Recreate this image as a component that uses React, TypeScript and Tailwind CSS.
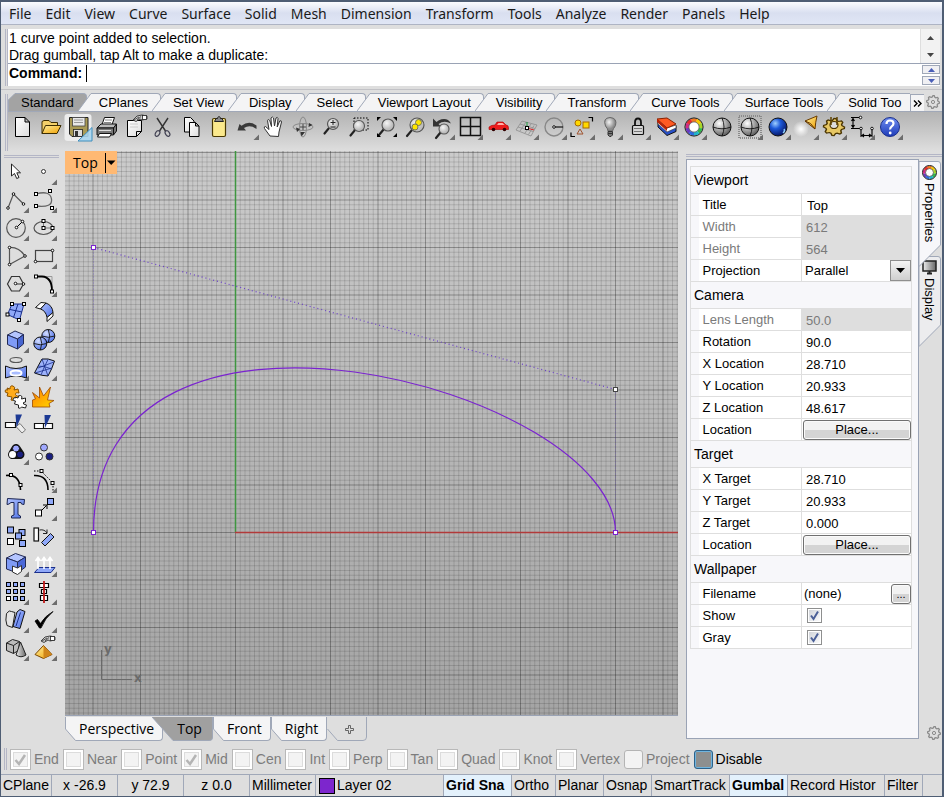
import { useState, type ReactNode } from "react"

interface Tool {
  name: string
  icon: ReactNode
  fly?: boolean
}

interface PropertyRow {
  name: string
  value?: string
  kind?: "text" | "disabled" | "select" | "button" | "file" | "check"
}

const menus = ["File", "Edit", "View", "Curve", "Surface", "Solid", "Mesh", "Dimension", "Transform", "Tools", "Analyze", "Render", "Panels", "Help"]

const toolTabs = ["Standard", "CPlanes", "Set View", "Display", "Select", "Viewport Layout", "Visibility", "Transform", "Curve Tools", "Surface Tools", "Solid Too"]

const snaps = ["End", "Near", "Point", "Mid", "Cen", "Int", "Perp", "Tan", "Quad", "Knot", "Vertex"]

const sections: { title: string; rows: PropertyRow[] }[] = [
  {
    title: "Viewport",
    rows: [
      { name: "Title", value: "Top" },
      { name: "Width", value: "612", kind: "disabled" },
      { name: "Height", value: "564", kind: "disabled" },
      { name: "Projection", value: "Parallel", kind: "select" },
    ],
  },
  {
    title: "Camera",
    rows: [
      { name: "Lens Length", value: "50.0", kind: "disabled" },
      { name: "Rotation", value: "90.0" },
      { name: "X Location", value: "28.710" },
      { name: "Y Location", value: "20.933" },
      { name: "Z Location", value: "48.617" },
      { name: "Location", value: "Place...", kind: "button" },
    ],
  },
  {
    title: "Target",
    rows: [
      { name: "X Target", value: "28.710" },
      { name: "Y Target", value: "20.933" },
      { name: "Z Target", value: "0.000" },
      { name: "Location", value: "Place...", kind: "button" },
    ],
  },
  {
    title: "Wallpaper",
    rows: [
      { name: "Filename", value: "(none)", kind: "file" },
      { name: "Show", kind: "check" },
      { name: "Gray", kind: "check" },
    ],
  },
]

// Small square control point used by many icons
const Pt = ({ x, y, s = 3, fill = "#fff" }: { x: number; y: number; s?: number; fill?: string }) => (
  <rect x={x - s / 2} y={y - s / 2} width={s} height={s} fill={fill} stroke="#000" strokeWidth="1" />
)

const Dot = ({ x, y }: { x: number; y: number }) => (
  <circle cx={x} cy={y} r="1.3" fill="#fff" stroke="#000" strokeWidth="0.9" />
)

const Lens = ({ x = 16, y = 11, r = 5.5, children }: { x?: number; y?: number; r?: number; children?: ReactNode }) => (
  <>
    <path d={`M${x - r * 0.7} ${y + r * 0.7}L${x - r - 3} ${y + r + 4}`} stroke="#222" strokeWidth="2.2" strokeLinecap="round" />
    <circle cx={x} cy={y} r={r} fill="url(#lens)" stroke="#555" strokeWidth="1.1" />
    {children}
  </>
)

const Pen = ({ x, y }: { x: number; y: number }) => (
  <g transform={`translate(${x} ${y})`}>
    <path d="M0 5L4 1L9 0L14 1V4L9 5L7 4L3 6.500z" fill="#ccc" stroke="#222" strokeWidth="0.8" />
    <path d="M1 5L6 2M4 5L8 1.500" stroke="#333" strokeWidth="0.8" />
    <rect x="9.500" y="0.500" width="4" height="4" fill="#fff" stroke="#222" strokeWidth="0.8" />
  </g>
)

const Wheel = ({ x = 14, y = 14, r = 7 }: { x?: number; y?: number; r?: number }) => {
  const colors = ["#f6c800", "#a6d728", "#2fb84c", "#22b5c9", "#2c6ae0", "#6a3bc0", "#d42a86", "#e52e2b", "#f2781d"]
  const at = (deg: number) => {
    const a = (deg * Math.PI) / 180
    return `${x + r * Math.cos(a)} ${y + r * Math.sin(a)}`
  }
  return (
    <>
      <circle cx={x} cy={y} r={r} fill="#fff" />
      {colors.map((c, i) => (
        <path key={c} d={`M${at(-70 + i * 40)}A${r} ${r} 0 0 1 ${at(-29 + i * 40)}`} fill="none" stroke={c} strokeWidth={r * 0.5} />
      ))}
      <circle cx={x} cy={y} r={r * 1.3} fill="none" stroke="#222" strokeWidth="1" />
      <circle cx={x} cy={y} r={r * 0.73} fill="none" stroke="#444" strokeWidth="0.7" />
    </>
  )
}

const Sphere = ({ x = 14, y = 14, r = 9, fill = "url(#graySphere)", lines = true }: { x?: number; y?: number; r?: number; fill?: string; lines?: boolean }) => (
  <>
    <circle cx={x} cy={y} r={r} fill={fill} stroke="#111" strokeWidth="1" />
    {lines && <path d={`M${x - r} ${y}Q${x} ${y + r * 0.4} ${x + r} ${y}M${x} ${y - r}Q${x + r * 0.45} ${y} ${x} ${y + r}`} fill="none" stroke="#111" strokeWidth="0.9" />}
  </>
)

const gearPath = () => {
  const pts: string[] = []
  for (let i = 0; i < 32; i++) {
    const r = i % 4 < 2 ? 1 : 0.78
    const a = (i / 32) * Math.PI * 2
    pts.push(`${(Math.cos(a) * r).toFixed(3)} ${(Math.sin(a) * r).toFixed(3)}`)
  }
  return `M${pts.join("L")}z`
}

const GearIcon = () => (
  <svg width="14" height="14" viewBox="-7 -7 14 14" fill="none" stroke="#8a8a8a">
    <path d={gearPath()} transform="scale(6.400)" strokeWidth="0.2" />
    <circle r="1.600" strokeWidth="1" />
  </svg>
)

const standardTools: Tool[] = [
  { name: "New", icon: <path d="M7.500 4.500h9.500l4.500 4.500v14.500h-14zM17 4.500v4.500h4.500" fill="url(#paper)" stroke="#000" /> },
  {
    name: "Open",
    icon: (
      <>
        <path d="M6 20.500V8.500l2-1h5l2 2h6.500v3" fill="#f3d06a" stroke="#3c2c00" />
        <path d="M6 20.500L9.500 12.500h15.500l-4 8z" fill="url(#gold)" stroke="#3c2c00" />
      </>
    ),
  },
  {
    name: "Save",
    icon: (
      <>
        <rect x="0.500" y="1" width="27" height="27" rx="3" fill="#ececec" />
        <path d="M5.500 4.500h18.500v19h-16l-2.500-2.500z" fill="#a99a55" stroke="#222" />
        <rect x="8.500" y="4.500" width="12.500" height="8.500" fill="#e9e9e9" stroke="#444" strokeWidth="0.8" />
        <path d="M10 7h9M10 9.500h9" stroke="#999" />
        <rect x="9.500" y="16.500" width="9" height="7" fill="#ddd" stroke="#222" strokeWidth="0.8" />
        <rect x="11" y="18" width="3" height="5" fill="#333" />
        <path d="M28 14.500V28H14z" fill="#a8d5ee" fillOpacity="0.9" stroke="#3f8fbe" />
      </>
    ),
  },
  {
    name: "Print",
    icon: (
      <>
        <path d="M9.500 13L12.500 4.500h10L19.500 13z" fill="#fff" stroke="#111" />
        <path d="M13 7h7M12 9.500h7" stroke="#888" />
        <path d="M5 15l4-4h15.500l-3 4z" fill="#bbb" stroke="#111" />
        <path d="M5 15h16.500v7H5zM21.500 15l3-4v7l-3 4z" fill="#777" stroke="#111" />
        <path d="M7.500 20.500h12l-2 3.500h-12z" fill="#fff" stroke="#111" />
        <path d="M7 17.500h12" stroke="#ddd" />
      </>
    ),
  },
  {
    name: "Document properties",
    icon: (
      <>
        <path d="M7.500 7.500h14v11l-5 5h-9zM16.500 23.500v-5h5" fill="url(#paper)" stroke="#000" />
        <path d="M10 11h8M10 14h8" stroke="#ccc" />
        <Pen x={13} y={2} />
      </>
    ),
  },
  {
    name: "Cut",
    icon: (
      <>
        <path d="M9 5l8.500 13M20 5l-8.500 13" stroke="#333" strokeWidth="1.400" />
        <ellipse cx="9.500" cy="20.500" rx="2" ry="3" transform="rotate(35 9.500 20.500)" fill="none" stroke="#445" strokeWidth="1.200" />
        <ellipse cx="19.500" cy="20.500" rx="2" ry="3" transform="rotate(-35 19.500 20.500)" fill="none" stroke="#445" strokeWidth="1.200" />
      </>
    ),
  },
  {
    name: "Copy",
    icon: (
      <>
        <path d="M8.500 4.500h6l3.500 3.500v11h-9.500z" fill="url(#paper)" stroke="#000" />
        <path d="M13.500 9.500h6l3.500 3.500v10.500h-9.500zM19.500 9.500v3.500h3.500" fill="url(#paper)" stroke="#000" />
      </>
    ),
  },
  {
    name: "Paste",
    icon: (
      <>
        <rect x="8.500" y="5.500" width="13" height="18" rx="1.500" fill="#fbe98c" stroke="#4a3900" strokeWidth="1.200" />
        <path d="M10.500 8.500l1.500-3h1.500c0-2.500 3-2.500 3 0h1.500l1.500 3z" fill="#888" stroke="#222" />
      </>
    ),
  },
  { name: "Undo", fly: true, icon: <path d="M5.500 17.500l2-6.500 2 1.800Q17 7 24.500 12.500v3.500Q18 11 12 15l2 2.500z" fill="#3a3a3a" /> },
  {
    name: "Pan",
    icon: <path d="M10 23L4.500 15.500q-1-2 1-2l3.500 3-1.500-9q.3-2 2.200 0l1.800 6-.5-8.500q1.500-2 2.500 0l1 8 1.500-8q1.500-1.500 2 .5l-.8 8.500 2.500-6q1.800-1 1.800 1L19 19l-.5 4.500z" fill="#fff" stroke="#333" />,
  },
  {
    name: "Rotate view",
    icon: (
      <>
        <ellipse cx="15" cy="14" rx="10" ry="3.500" fill="none" stroke="#8a8a8a" />
        <ellipse cx="15" cy="14" rx="3.500" ry="10" fill="none" stroke="#8a8a8a" />
        <path d="M15 11v6M12 14h6" stroke="#444" />
        <path d="M8 14.500l4 1.500-3 3zM21 10l3.500 2-4 2zM17 19l-3.500 4.500-1-4.500z" fill="#333" />
      </>
    ),
  },
  {
    name: "Zoom dynamic",
    icon: (
      <Lens x={17}>
        <path d="M14.500 9.500h5M17 7v5M14.500 14h5" stroke="#222" />
      </Lens>
    ),
  },
  {
    name: "Zoom window",
    icon: (
      <>
        <rect x="10" y="5" width="14" height="12" fill="none" stroke="#000" strokeDasharray="1.500 1.500" />
        <Lens x={15} y={13} r={5.5} />
      </>
    ),
  },
  {
    name: "Zoom extents",
    icon: (
      <>
        <Lens x={16} y={12} r={6} />
        <path d="M5 4h4l-4 4zM25 4h-4l4 4zM5 24h4l-4-4zM25 24h-4l4-4z" fill="#000" />
      </>
    ),
  },
  {
    name: "Zoom selected",
    icon: (
      <Lens x={17} y={12} r={7}>
        <circle cx="18.500" cy="9.500" r="3" fill="#ffe600" stroke="#775" />
        <circle cx="15" cy="14" r="3" fill="#ffe600" stroke="#775" />
      </Lens>
    ),
  },
  {
    name: "Undo view",
    fly: true,
    icon: (
      <>
        <path d="M5 5.500v8h8l-2.500-2.500Q16 7 23 10.500q-4-7-12.500-3L8.500 9z" fill="#333" />
        <Lens x={16} y={16} r={5} />
      </>
    ),
  },
  { name: "Four viewports", fly: true, icon: <path d="M4.500 4.500h20v18h-20zM14.500 4.500v18M4.500 13.500h20" fill="none" stroke="#111" strokeWidth="1.500" /> },
  {
    name: "Car",
    fly: true,
    icon: (
      <>
        <path d="M5 14q2-2 6-2l2-3h6l3 3q2.500 0 2.500 3v1.500H5z" fill="#ec1c1c" stroke="#a00" strokeWidth="0.6" />
        <path d="M13 12l1.500-2h4l2 2z" fill="#ffb0a8" />
        <circle cx="9.500" cy="16.500" r="1.800" fill="#300" />
        <circle cx="20.500" cy="16.500" r="1.800" fill="#300" />
      </>
    ),
  },
  {
    name: "CPlane",
    fly: true,
    icon: (
      <>
        <path d="M4 17L10 8L25 12L19 23zM6 14l15 4.500M8 11l15 4.500M8 18l6-9M13 20l6-9M16.500 21.500l5.500-9" fill="none" stroke="#8d8d8d" strokeWidth="0.8" />
        <path d="M15 15V9" stroke="#1a9a3a" />
        <path d="M15 15l7 2" stroke="#d22" />
        <Pt x={15} y={15} />
      </>
    ),
  },
  {
    name: "Circle radius",
    fly: true,
    icon: (
      <>
        <circle cx="14" cy="14" r="9" fill="none" stroke="#888" strokeWidth="1.400" />
        <path d="M14 14h9" stroke="#111" strokeWidth="1.200" />
        <Dot x={14} y={14} />
      </>
    ),
  },
  {
    name: "Select",
    fly: true,
    icon: (
      <>
        <circle cx="10" cy="10" r="3" fill="#ffd800" stroke="#a76a00" />
        <rect x="15" y="9" width="6" height="6" fill="#ffd800" stroke="#a76a00" />
        <path d="M9 21l3-5 3 5z" fill="none" stroke="#a0522d" />
        <path d="M20.500 4.500h4v4M3 19.500v4h4" fill="none" stroke="#000" strokeWidth="1.200" />
      </>
    ),
  },
  {
    name: "Hide",
    fly: true,
    icon: (
      <>
        <path d="M12 18q0-2-2.500-5Q6.500 5 14 4.500Q21.500 5 19.500 12.500Q17 16 16.500 18z" fill="url(#bulb)" stroke="#666" />
        <path d="M12 18.500h4.500v3.500l-1.500 1.500h-1.500l-1.500-1.500zM12 20.500h4.500" fill="#777" stroke="#333" />
      </>
    ),
  },
  {
    name: "Lock",
    fly: true,
    icon: (
      <>
        <path d="M11 13V9.500Q11 5.500 14 5.500T17 9.500V13" fill="none" stroke="#111" strokeWidth="1.800" />
        <rect x="8.500" y="12.500" width="11" height="9" rx="1" fill="#d8d8d8" stroke="#111" strokeWidth="1.200" />
        <path d="M10 15.500h8M10 18.500h8" stroke="#777" />
      </>
    ),
  },
  {
    name: "Layers",
    fly: true,
    icon: (
      <>
        <path d="M6 14l9 8.500 9-4v-6l-9 4L6 8z" fill="#2850c8" stroke="#111" />
        <path d="M6 11l9 8 9-4v-3l-9 3-9-8z" fill="#fff" stroke="#333" strokeWidth="0.6" />
        <path d="M5 6l10-1 9 6-9 4z" fill="#ff5a22" stroke="#8a2000" />
        <path d="M5 6l10 9v3L5 9z" fill="#b72206" />
      </>
    ),
  },
  { name: "Color wheel", fly: true, icon: <Wheel /> },
  { name: "Shade", icon: <Sphere /> },
  {
    name: "Render preview",
    fly: true,
    icon: (
      <>
        <rect x="3" y="3" width="22" height="22" fill="none" stroke="#8a8a8a" strokeWidth="2" strokeDasharray="1 1" />
        <Sphere />
      </>
    ),
  },
  {
    name: "Render",
    fly: true,
    icon: (
      <>
        <Sphere fill="url(#blueSphere)" lines={false} />
        <path d="M20 16q1.500 2-1 4" fill="none" stroke="#8fd0ff" strokeWidth="1.500" />
      </>
    ),
  },
  {
    name: "Spotlight",
    fly: true,
    icon: (
      <>
        <ellipse cx="9" cy="16" rx="8" ry="8" fill="url(#glow)" />
        <path d="M13 8l12-5Q23.500 9 23 16z" fill="url(#gold)" stroke="#6b3d00" />
        <path d="M13 8q6 1 10 8" fill="none" stroke="#5c3000" />
      </>
    ),
  },
  {
    name: "Options",
    fly: true,
    icon: (
      <>
        <g transform="translate(14 14) scale(10.500 8.500)">
          <path d={gearPath()} fill="#e7c763" stroke="#4b3500" strokeWidth="0.140" />
        </g>
        <ellipse cx="14" cy="12" rx="4" ry="3.500" fill="#ddd" stroke="#4b3500" strokeWidth="1.200" />
        <path d="M11 4v8M17 4v8" stroke="#5d4200" strokeWidth="1.500" />
      </>
    ),
  },
  {
    name: "Dimension",
    fly: true,
    icon: (
      <>
        <path d="M3 4.500h9M5 5v10M3.500 8l1.500-2.500 1.500 2.500M3.500 12l1.500 2.500 1.500-2.500M3 15.500h9M13 16v8M24 16v8M14 22.500h9M16 21l-2 1.500 2 1.500M21 21l2 1.500-2 1.500" fill="none" stroke="#000" strokeWidth="1.100" />
        <Dot x={12.5} y={4.5} />
        <Dot x={13} y={15.5} />
        <Dot x={24} y={15.5} />
      </>
    ),
  },
  {
    name: "Help",
    fly: true,
    icon: (
      <>
        <circle cx="14" cy="14" r="9.500" fill="url(#helpBlue)" stroke="#1a2f8c" />
        <path d="M10.500 11q0-3.500 3.500-3.500t3.500 3q0 1.500-1.800 2.800T14.200 16.500" fill="none" stroke="#fff" strokeWidth="2.200" />
        <circle cx="14.200" cy="20" r="1.400" fill="#fff" />
      </>
    ),
  },
]

const sideTools: Tool[] = [
  { name: "Cancel", icon: <path d="M9.500 6v12l3-2.500 2.200 5 2.300-1-2.200-4.700h3.700z" fill="#fff" stroke="#222" /> },
  { name: "Point", fly: true, icon: <circle cx="13.500" cy="13.500" r="2" fill="#fff" stroke="#333" /> },
  {
    name: "Polyline",
    fly: true,
    icon: (
      <>
        <path d="M6 22L11.500 8L21.500 18" fill="none" stroke="#555" strokeWidth="1.200" />
        <Dot x={6} y={22} />
        <Dot x={11.5} y={8} />
        <Dot x={21.5} y={18} />
      </>
    ),
  },
  {
    name: "Control point curve",
    fly: true,
    icon: (
      <>
        <path d="M6 8Q20 4 21.500 13T6 20" fill="none" stroke="#666" strokeWidth="1.300" />
        <Pt x={6} y={8} />
        <Pt x={20} y={5} />
        <Pt x={6} y={20} />
        <Pt x={22} y={22} />
      </>
    ),
  },
  {
    name: "Circle",
    fly: true,
    icon: (
      <>
        <circle cx="14" cy="14" r="9.300" fill="none" stroke="#555" strokeWidth="1.200" />
        <path d="M14 14l6.500-6.500" stroke="#000" />
        <Dot x={14.5} y={13.5} />
        <Dot x={20.5} y={7.5} />
      </>
    ),
  },
  {
    name: "Ellipse",
    fly: true,
    icon: (
      <>
        <ellipse cx="13.500" cy="14" rx="9.500" ry="6.500" fill="none" stroke="#555" strokeWidth="1.200" />
        <path d="M13.500 7v7h9" stroke="#777" fill="none" />
        <Pt x={13.5} y={7} />
        <Pt x={13.5} y={14} />
        <Pt x={22.5} y={14} />
      </>
    ),
  },
  {
    name: "Arc",
    fly: true,
    icon: (
      <>
        <path d="M23 14L7.500 22.500V5.500Q17 5 23 14" fill="none" stroke="#555" strokeWidth="1.200" />
        <Dot x={7.5} y={5.5} />
        <Dot x={23} y={14} />
        <Dot x={7.5} y={22.5} />
      </>
    ),
  },
  {
    name: "Rectangle",
    fly: true,
    icon: (
      <>
        <rect x="5.500" y="8.500" width="17" height="11" fill="none" stroke="#444" strokeWidth="1.200" />
        <Dot x={22.5} y={8.5} />
        <Dot x={5.5} y={19.5} />
      </>
    ),
  },
  {
    name: "Polygon",
    fly: true,
    icon: (
      <>
        <path d="M5.500 14l4-7.500h8l4 7.500-4 7h-8zM14 14h7" fill="none" stroke="#333" strokeWidth="1.200" />
        <Dot x={13.5} y={13.5} />
        <Dot x={21.5} y={14} />
      </>
    ),
  },
  {
    name: "Fillet",
    fly: true,
    icon: (
      <>
        <path d="M6 6.500h16v15" fill="none" stroke="#999" />
        <path d="M6 6.500h6Q22 7 22 21" fill="none" stroke="#000" strokeWidth="1.800" />
        <Pt x={6} y={6.5} />
        <Pt x={22} y={21.5} />
      </>
    ),
  },
  {
    name: "Surface from points",
    fly: true,
    icon: (
      <>
        <path d="M10 6h12l-4.500 16-12-5.500z" fill="#8fa8f8" stroke="#1a2f8c" />
        <path d="M16 6l-4.500 13.500M8 11.500l12 2.500" stroke="#1a2f8c" />
        <Pt x={10} y={6} />
        <Pt x={22} y={6} />
        <Pt x={5.5} y={16.5} />
        <Pt x={17} y={22} />
      </>
    ),
  },
  {
    name: "Sweep",
    fly: true,
    icon: (
      <>
        <path d="M5.500 9.500L11 4.500L16 5L10.500 11z" fill="#fff" stroke="#111" />
        <path d="M10.500 11L16 5Q22.500 7.500 23 14.500L17 19.500Q16 13 10.500 11z" fill="url(#blue)" stroke="#111" />
        <path d="M17 19.500L23 14.500V18L17 23.500z" fill="#fff" stroke="#111" />
      </>
    ),
  },
  {
    name: "Box",
    fly: true,
    icon: (
      <>
        <path d="M5.500 9L13 5l8.500 3.500L15.500 13z" fill="#b4c5ff" stroke="#222a55" />
        <path d="M5.500 9l10 4v10L5.500 18.500z" fill="#7f9bf6" stroke="#222a55" />
        <path d="M21.500 8.500V18l-6 5V13z" fill="#4765d0" stroke="#222a55" />
      </>
    ),
  },
  {
    name: "Sphere",
    fly: true,
    icon: (
      <>
        <Sphere x={18.3} y={10} r={6.5} fill="url(#blueBall)" />
        <Sphere x={10.3} y={17.5} r={6.5} fill="url(#blueBall)" />
      </>
    ),
  },
  {
    name: "Project curve",
    fly: true,
    icon: (
      <>
        <ellipse cx="14" cy="6" rx="6" ry="2.500" fill="none" stroke="#555" strokeWidth="1.200" />
        <path d="M3.500 12q10.500 5 21 0v12q-10.500-4-21 0z" fill="url(#blue)" stroke="#111" />
        <ellipse cx="14" cy="19" rx="5.500" ry="2.500" fill="#a9bcff" stroke="#fff" strokeWidth="2" />
      </>
    ),
  },
  {
    name: "Patch",
    fly: true,
    icon: (
      <>
        <path d="M12 5Q18 4 24.500 7Q22 15 18 22Q12 22 4.500 19Q8 12 12 5z" fill="#9db2fa" stroke="#111" />
        <path d="M18 5.500Q14 13 11 21M8 12Q15 12 21.500 15M12 5L18 22M24 8L8 14M22 14L5 19" stroke="#1a2f8c" strokeWidth="0.8" fill="none" />
      </>
    ),
  },
  {
    name: "Join",
    icon: (
      <>
        <path d="M5 6l3 1q0-4 3-3t1 4l4-1 1 4q-4-1-3.500 1.500T18 14l-2 4-4-1.500q-1 3-3 1.500l1-3-5-1 1-3q-3 0-3-2t3-1z" fill="#ffab1a" stroke="#8a5200" />
        <path d="M13 15l3 1q0-3 2.500-2.500t1 3.500l4-1v4q-3 0-2 2l3 1-1 3-4-1q-1 2-3 1v-3l-4-1 1-3q-3 0-2.500-2t2.500-1z" fill="#fff" stroke="#222" />
      </>
    ),
  },
  { name: "Explode", icon: <path d="M2.500 25V18l3-1-3-6.500 7 5.500V5l4 9L20.500 5l-3 13 6.500.5-5 3L20 25z" fill="url(#fire)" stroke="#9a4a00" strokeWidth="0.8" /> },
  {
    name: "Trim",
    icon: (
      <>
        <path d="M3.500 12.500h10v5h-10z" fill="#fff" stroke="#111" strokeWidth="1.200" />
        <path d="M14 16.500l4-3 5.500 6.500-3.500 3z" fill="#eee" stroke="#777" />
        <path d="M13.500 4.500h6.500L14.500 17.500z" fill="#1d3a94" />
      </>
    ),
  },
  {
    name: "Split",
    icon: (
      <>
        <path d="M4.500 13.500h18v5h-18zM13.500 13.500v5" fill="#fff" stroke="#111" strokeWidth="1.200" />
        <path d="M14.500 5h6.500L15 18z" fill="#1d3a94" />
      </>
    ),
  },
  {
    name: "Group",
    fly: true,
    icon: (
      <>
        <path d="M14 10.500l-3.500 6h7.500z" stroke="#111" strokeWidth="9" strokeLinejoin="round" fill="#111" />
        <circle cx="14" cy="10.500" r="3.500" fill="#9fa8ff" stroke="#111" />
        <circle cx="18" cy="16.500" r="3.500" fill="#1a1f80" stroke="#111" />
        <circle cx="10.500" cy="16.500" r="3.500" fill="#fff" />
      </>
    ),
  },
  {
    name: "Ungroup",
    icon: (
      <>
        <circle cx="14" cy="9.500" r="3.500" fill="#9fa8ff" stroke="#333" />
        <circle cx="9" cy="18.500" r="3.500" fill="#fff" stroke="#333" />
        <circle cx="19.500" cy="18.500" r="3.500" fill="#1a1f80" stroke="#333" />
      </>
    ),
  },
  {
    name: "Points on",
    icon: (
      <>
        <path d="M4 9.500Q18 8 18.500 24" fill="none" stroke="#000" strokeWidth="1.600" />
        <Pt x={9} y={9} />
        <Pt x={18.5} y={19} />
      </>
    ),
  },
  {
    name: "Edit points",
    fly: true,
    icon: (
      <>
        <path d="M4 9.500Q18 9 18 24" fill="none" stroke="#000" strokeWidth="1.600" />
        <path d="M4 5h7L23 17v9" fill="none" stroke="#000" strokeDasharray="1.500 1.500" />
        <Pt x={11.5} y={5} />
        <Pt x={22.5} y={17} />
      </>
    ),
  },
  { name: "Text", icon: <path d="M5.500 4.500l17 1-.5 5-2.500-.5-.5-1.500h-3v12l2.500 1.500v2h-9v-2l2.500-1V8.500H9l-2 1.500-2 .5z" fill="url(#blue)" stroke="#1a2450" strokeWidth="1" /> },
  {
    name: "Move",
    fly: true,
    icon: (
      <>
        <Pt x={20.5} y={7.5} s={6} fill="#8fa8f8" />
        <Pt x={8.5} y={19} s={6} />
        <path d="M12 16l4.500-4.500M13 11h4v4" fill="none" stroke="#000" />
      </>
    ),
  },
  {
    name: "Copy objects",
    icon: (
      <>
        <Pt x={8.5} y={8} s={6} fill="#8fa8f8" />
        <Pt x={20} y={10.5} s={6} fill="#8fa8f8" />
        <Pt x={16.5} y={14} s={6} fill="#8fa8f8" />
        <Pt x={8.5} y={19.5} s={6} />
        <Pt x={20.5} y={21.5} s={6} fill="#8fa8f8" />
      </>
    ),
  },
  {
    name: "Rotate",
    icon: (
      <>
        <rect x="4" y="6" width="4.500" height="13" fill="#fff" stroke="#111" strokeWidth="1.200" />
        <path d="M11.500 20.500l9-9 3.500 3.500-9 9z" fill="#8fa8f8" stroke="#111" />
        <path d="M9.500 8q5-1 7.500 3M17 7.500v4h-4" fill="none" stroke="#222" />
      </>
    ),
  },
  {
    name: "Boolean",
    fly: true,
    icon: (
      <>
        <path d="M4.500 8l9-4.500L23.500 7l-8 5z" fill="#b4c5ff" stroke="#222a55" />
        <path d="M4.500 8l11 4v11l-11-4z" fill="#7f9bf6" stroke="#222a55" />
        <path d="M23.500 7v10l-8 6V12z" fill="#4a68d8" stroke="#222a55" />
        <path d="M10.500 16l5 2 4-2.500v6l-4 3-5-2.500z" fill="#fff" stroke="#333" />
      </>
    ),
  },
  {
    name: "Extrude",
    fly: true,
    icon: (
      <>
        <path d="M4.500 22.500L9 17.500h16l-4 5z" fill="#8fa8f8" stroke="#1a2f8c" />
        <path d="M8 19V9M14 19V9M20 19V9M5.500 11L8 7.500l2.500 3.500M11.500 11L14 7.500l2.500 3.500M17.500 11L20 7.500l2.500 3.500" fill="none" stroke="#fff" strokeWidth="1.600" />
      </>
    ),
  },
  {
    name: "Array",
    fly: true,
    icon: (
      <>
        {[6.5, 13.5, 20.5].map((y) => [6.5, 13.5, 20.5].map((x) => <Pt key={`${x}-${y}`} x={x} y={y} s={4} fill={x < 7 && y > 20 ? "#fff" : "#8fa8f8"} />))}
      </>
    ),
  },
  {
    name: "Align",
    fly: true,
    icon: (
      <>
        <path d="M9.500 5.500h9v4h-9zM11.500 11.500h5v4h-5zM10.500 17.500h7v5h-7z" fill="#fff" stroke="#000" strokeWidth="1.200" />
        <path d="M14 3v22" stroke="#c01818" strokeWidth="1.800" />
      </>
    ),
  },
  {
    name: "Flow",
    fly: true,
    icon: (
      <>
        <path d="M4.500 7.500q3-4 5-2l3.500 1-2.500 15-5.500-2q-2-5-.500-12z" fill="#e4e4e4" stroke="#222" />
        <path d="M15 6l3-2.500 5 2L18 22.500l-7-2z" fill="url(#blue)" stroke="#111" />
        <path d="M18.500 6.500L14 20" stroke="#1a2f8c" />
      </>
    ),
  },
  { name: "Check", fly: true, icon: <path d="M5 15l2.500-1.500 3 4Q15 10 23 5.500Q15 12 11 22H9.500z" fill="#000" stroke="#000" strokeWidth="0.8" /> },
  {
    name: "Solids",
    fly: true,
    icon: (
      <>
        <path d="M4.500 9l6-3.500 7 2-1 9-5 3-7-3z" fill="#bbb" stroke="#222" />
        <path d="M4.500 9l7 2.500v8M11.500 11.500l6-4" fill="none" stroke="#222" />
        <path d="M18.500 8l5.500 13q-5 3.500-10 0z" fill="url(#metal)" stroke="#222" />
      </>
    ),
  },
  {
    name: "Mesh tools",
    fly: true,
    icon: (
      <>
        <path d="M5 20.500l8.500-9 8.500 9-8.500 4z" fill="url(#gold)" stroke="#7a4600" />
        <path d="M13.500 11.500v13l8.500-4z" fill="#d0851a" />
        <Pen x={11} y={2} />
      </>
    ),
  },
]

const Defs = () => (
  <svg className="absolute size-0" aria-hidden="true">
    <defs>
      <linearGradient id="paper" x2="1" y2="1"><stop stopColor="#fff" /><stop offset="1" stopColor="#dcdcdc" /></linearGradient>
      <linearGradient id="gold" x2="1" y2="1"><stop stopColor="#fff0a0" /><stop offset="1" stopColor="#f0a000" /></linearGradient>
      <linearGradient id="fire" x2="1" y2="1"><stop stopColor="#ff7a00" /><stop offset="1" stopColor="#ffd800" /></linearGradient>
      <linearGradient id="blue" x2="1" y2="1"><stop stopColor="#b4c5ff" /><stop offset="1" stopColor="#4a6ee6" /></linearGradient>
      <linearGradient id="metal"><stop stopColor="#eee" /><stop offset="1" stopColor="#666" /></linearGradient>
      <linearGradient id="helpBlue" x2="0" y2="1"><stop stopColor="#6e8cf0" /><stop offset="1" stopColor="#1e3cb8" /></linearGradient>
      <radialGradient id="lens" cx="0.4" cy="0.35"><stop stopColor="#f5f5f5" /><stop offset="1" stopColor="#bdbdbd" /></radialGradient>
      <radialGradient id="bulb" cx="0.4" cy="0.35"><stop stopColor="#f2f2f2" /><stop offset="1" stopColor="#8a8a8a" /></radialGradient>
      <radialGradient id="graySphere" cx="0.35" cy="0.3" r="0.75"><stop stopColor="#fff" /><stop offset="1" stopColor="#555" /></radialGradient>
      <radialGradient id="blueBall" cx="0.35" cy="0.3" r="0.75"><stop stopColor="#d4deff" /><stop offset="1" stopColor="#4a6ee6" /></radialGradient>
      <radialGradient id="blueSphere" cx="0.35" cy="0.3" r="0.75"><stop stopColor="#9fd0ff" /><stop offset="0.400" stopColor="#1c58d8" /><stop offset="1" stopColor="#04105c" /></radialGradient>
      <radialGradient id="glow"><stop stopColor="#fff" /><stop offset="1" stopColor="#fff" stopOpacity="0" /></radialGradient>
    </defs>
  </svg>
)

const ToolButton = ({ tool }: { tool: Tool }) => (
  <button aria-label={tool.name} className="size-7 shrink-0">
    <svg width="28" height="28" viewBox="0 0 28 28" fill="none" overflow="visible">
      {tool.icon}
      {tool.fly && <path d="M27 21.500V27H21.500z" fill="#6d6d6d" />}
    </svg>
  </button>
)

const Grip = () => <div className="w-[3px] shrink-0 border-x border-[#b4b6c6]" />

const ToolbarTab = ({ label, active, first, onClick }: { label: string; active: boolean; first: boolean; onClick: () => void }) => (
  <button onClick={onClick} className={`relative flex h-[18px] shrink-0 ${first ? "" : "-ml-[9px]"}`}>
    <svg width={first ? 8 : 14} height="18" viewBox={first ? "0 0 8 18" : "0 0 14 18"} className="shrink-0">
      <path d={first ? "M0 18V7L7 0.500H8V18z" : "M0 18L13 0.500H14V18z"} fill={active ? "#a3a3a3" : "#f4f4f5"} />
      <path d={first ? "M0.500 18V7L7 0.500H8" : "M0 18L13 0.500H14"} fill="none" stroke="#a0a8b8" />
    </svg>
    <span className={`h-full rounded-tr border-t border-r border-[#a0a8b8] pr-3 text-[13px] leading-[18px] whitespace-nowrap ${first ? "pl-[5px]" : "pl-[7px]"} ${active ? "bg-[#a3a3a3]" : "bg-[#f4f4f5]"}`}>
      {label}
    </span>
  </button>
)

const ViewTab = ({ label, active, onClick }: { label: string; active: boolean; onClick: () => void }) => (
  <button onClick={onClick} className={`flex h-6 font-['Open_Sans',sans-serif] text-sm ${active ? "relative -ml-[11px]" : ""}`}>
    <svg width={active ? 22 : 11} height="24" viewBox={active ? "0 0 22 24" : "0 0 11 24"} className="shrink-0">
      <path d={active ? "M0 0H22V24L21 23.500z" : "M0.500 0H11V23.500L0.500 12z"} fill={active ? "#a0a0a0" : "#f4f4f5"} />
      <path d={active ? "M0 0L21 23.500H22" : "M0.500 0V12L10.500 23.500H11"} fill="none" stroke="#a0a8b8" />
    </svg>
    <span className={`h-full rounded-br border-r border-b border-[#a0a8b8] pl-[3px] leading-6 ${active ? "bg-[#a0a0a0] pr-2.5" : "bg-[#f4f4f5] pr-2"}`}>{label}</span>
  </button>
)

// Grid origin and spacing, in viewport pixels
const ORIGIN_X = 170.5
const ORIGIN_Y = 381.5
const STEP = 4.75

const gridLines = (every: (i: number) => boolean) => {
  let d = ""
  for (let i = -400; i <= 400; i++) {
    if (!every(i)) continue
    d += `M${ORIGIN_X + i * STEP} -1500V3000M-1500 ${ORIGIN_Y + i * STEP}H3500`
  }
  return d
}

const Viewport = () => (
  <div className="relative min-h-0 flex-1 border-b border-[#9aa3b5] bg-linear-to-b from-[#cbcbcb] to-[#a4a4a4]">
    <svg className="absolute inset-0 h-full w-full" fill="none">
      <path d={gridLines((i) => i % 10 !== 0)} stroke="#000" strokeOpacity="0.130" />
      <path d={gridLines((i) => i % 10 === 0)} stroke="#000" strokeOpacity="0.300" />
      <path d="M170.500 0V381" stroke="#3f9640" strokeWidth="1.500" />
      <path d="M170 381.500H3000" stroke="#b23a3a" strokeWidth="1.500" />
      <path d="M28.500 381.500V96.500M550.500 238.500V381.500" stroke="#7058c8" strokeOpacity="0.600" strokeDasharray="1 2" />
      <path d="M28.500 96.500L550.500 238.500" stroke="#6a3fc8" strokeDasharray="1 3" strokeWidth="1.200" />
      <path d="M28.500 381.500C28.500 96.500 550.500 238.500 550.500 381.500" stroke="#7a22d0" strokeWidth="1.200" />
      {[[28.5, 96.5], [550.5, 238.5], [28.5, 381.5], [550.5, 381.5]].map(([x, y], i) => (
        <rect key={i} x={x - 2} y={y - 2} width="4" height="4" fill="#fff" stroke={i === 1 ? "#444" : "#7a22d0"} />
      ))}
      <g className="font-['DejaVu_Sans',sans-serif] text-xs font-bold">
        <path d="M36.500 499V528.500H67" stroke="#6a6a6a" />
        <text x="39" y="502" fill="#6a6a6a">y</text>
        <text x="69" y="531" fill="#6a6a6a">x</text>
      </g>
    </svg>
    <button className="absolute top-0 left-0 flex h-[23px] items-center bg-[#ffb973] font-['Open_Sans',sans-serif] text-sm">
      <span className="border-r border-black pr-[7px] pl-2">Top</span>
      <svg width="11" height="6" viewBox="0 0 11 6"><path d="M1 0.500h8.500L5.200 5z" fill="#000" /></svg>
    </button>
  </div>
)

const PropertyValue = ({ row, id }: { row: PropertyRow; id: string }) => {
  const buttonStyle = "rounded-[3px] border border-[#707070] bg-linear-to-b from-[#f2f2f2] from-50% to-[#d4d4d4] to-50% shadow-[inset_0_0_0_1px_#fafafa]"
  switch (row.kind) {
    case "select":
      return (
        <div className="relative">
          <select id={id} className="block h-[21px] w-full appearance-none bg-white pl-[3px] outline-none">
            <option>{row.value}</option>
          </select>
          <span className="pointer-events-none absolute top-0 right-0 flex h-[21px] w-[21px] items-center justify-center border border-[#8e8e8e] bg-linear-to-b from-[#f4f4f4] to-[#cfcfcf]">
            <svg width="9" height="5" viewBox="0 0 9 5"><path d="M0 0h9L4.500 5z" fill="#000" /></svg>
          </span>
        </div>
      )
    case "button":
      return <button id={id} className={`mx-px block h-5 w-[108px] leading-[18px] ${buttonStyle}`}>{row.value}</button>
    case "file":
      return (
        <div className="flex items-center justify-between pl-0.5">
          <span>{row.value}</span>
          <button id={id} aria-label="Browse" className={`h-5 w-5 text-[11px] leading-[18px] ${buttonStyle}`}>...</button>
        </div>
      )
    case "check":
      return (
        <div className="relative ml-[5px] size-[15px]">
          <input id={id} type="checkbox" defaultChecked className="peer block size-[15px] appearance-none border border-[#8e8f8f] bg-linear-to-br from-[#ccd0d6] to-white shadow-[inset_0_0_0_1px_#fff]" />
          <svg width="15" height="15" viewBox="0 0 15 15" fill="none" className="pointer-events-none absolute inset-0 hidden peer-checked:block">
            <path d="M4 7.500l2.500 3.500L11 3.500" stroke="#4a5f97" strokeWidth="2" />
          </svg>
        </div>
      )
    default:
      return (
        <input
          id={id}
          defaultValue={row.value}
          disabled={row.kind === "disabled"}
          className={`block h-[21px] w-full pt-px outline-none ${row.name === "Title" ? "pl-[5px]" : "pl-1"} ${row.kind === "disabled" ? "bg-[#dedede] text-[#7a7a7a]" : "bg-white"}`}
        />
      )
  }
}

const PropertiesPanel = () => (
  <section aria-label="Properties" className="mt-2 flex flex-col border border-[#9aa3b5] bg-[#f7f7fa] px-[3px] pt-1.5">
    <table className="w-[222px] table-fixed border-collapse border border-[#dedede] text-[13px]">
      <colgroup>
        <col className="w-[8px]" />
        <col className="w-[103px]" />
        <col />
      </colgroup>
      {sections.map((section) => (
        <tbody key={section.title}>
          <tr className="h-[27px] border-b border-[#dedede]">
            <th colSpan={3} className="p-0 pl-[3px] text-left text-sm font-normal">{section.title}</th>
          </tr>
          {section.rows.map((row) => {
            const id = `${section.title}-${row.name}`
            return (
              <tr key={row.name} className="h-[22px] border-b border-[#dedede] bg-white">
                <td className="bg-[#f7f7fa] p-0" />
                <td className={`border-r border-[#dedede] p-0 pt-px pl-1 ${row.kind === "disabled" ? "text-[#7a7a7a]" : ""}`}>
                  <label htmlFor={id}>{row.name}</label>
                </td>
                <td className="p-0"><PropertyValue row={row} id={id} /></td>
              </tr>
            )
          })}
        </tbody>
      ))}
    </table>
  </section>
)

const SideTab = ({ label, icon, active }: { label: string; icon: ReactNode; active?: boolean }) => (
  <button className={`relative flex w-[22px] flex-col items-center gap-[3px] pt-1 pr-0.5 ${active ? "z-10 h-[106px]" : "-mt-[11px] h-[91px]"}`}>
    <svg width="22" height="100%" viewBox={active ? "0 0 22 106" : "0 0 22 91"} className="absolute inset-0">
      <path d={active ? "M0 0.500H19Q21.500 0.500 21.500 3V84L0 105.500z" : "M0 0.500H19Q21.500 0.500 21.500 3V69L0 90.500z"} fill={active ? "#f7f7fa" : "#ececee"} stroke="#a0a8b8" />
    </svg>
    <span className="relative">{icon}</span>
    <span className="relative text-[13px] leading-[18px] [writing-mode:vertical-rl]">{label}</span>
  </button>
)

const Snap = ({ label, checked }: { label: string; checked?: boolean }) => (
  <label className="relative flex shrink-0 items-center gap-[3px]">
    <input type="checkbox" defaultChecked={checked} className="peer size-[21px] appearance-none border border-[#b8b8b8] bg-[#f3f3f3] shadow-[inset_0_0_0_2px_#fff,inset_0_0_0_3px_#dcdcdc]" />
    <svg width="21" height="21" viewBox="0 0 21 21" fill="none" className="pointer-events-none absolute left-0 hidden peer-checked:block">
      <path d="M5.500 11l3.500 4 6-9" stroke="#b4b4b4" strokeWidth="2.500" />
    </svg>
    {label}
  </label>
)

const StatusCell = ({ width, on, center, children }: { width: string; on?: boolean; center?: boolean; children: ReactNode }) => (
  <button className={`shrink-0 border-r border-[#a0a8b8] px-0.5 whitespace-nowrap ${width} ${on ? "bg-[#e3f1fc] font-bold" : ""} ${center ? "text-center" : "text-left"}`}>
    {children}
  </button>
)

const App = () => {
  const [toolTab, setToolTab] = useState("Standard")
  const [viewTab, setViewTab] = useState("Top")
  const [command, setCommand] = useState("")

  return (
    <div className="flex h-screen flex-col overflow-hidden border border-t-2 border-r-2 border-[#4f5e74] bg-[#dedede] font-['Liberation_Sans',Arial,sans-serif] text-black">
      <Defs />

      <nav className="flex h-[23px] shrink-0 items-center border-b border-[#aeb4c4] bg-linear-to-b from-[#fbfcff] via-[#d9dff0] to-[#e0e6f5] pt-px pl-px font-['Noto_Sans',sans-serif] text-sm">
        {menus.map((menu) => (
          <button key={menu} className="px-[7px] text-[#1a1a1a]">{menu}</button>
        ))}
      </nav>

      {/* Command history and prompt */}
      <div className="mt-1 flex shrink-0 pr-0.5 pl-1">
        <Grip />
        <div className="flex-1 bg-white text-sm leading-[17px]">
          <div className="flex h-[35px] border-b border-[#9aa3b5]">
            <div className="flex-1 pt-px pl-px">
              <p>1 curve point added to selection.</p>
              <p>Drag gumball, tap Alt to make a duplicate:</p>
            </div>
            <div className="flex w-5 flex-col items-center justify-around border-l border-[#dedede] bg-[#f2f2f2]">
              <button aria-label="Scroll up"><svg width="7" height="4" viewBox="0 0 7 4"><path d="M0 4h7L3.500 0z" fill="#444" /></svg></button>
              <button aria-label="Scroll down"><svg width="7" height="4" viewBox="0 0 7 4"><path d="M0 0h7L3.500 4z" fill="#444" /></svg></button>
            </div>
          </div>
          <div className="flex h-[22px]">
            <label htmlFor="command" className="pt-px pl-px font-bold">Command:</label>
            <input id="command" autoFocus value={command} onChange={(e) => setCommand(e.target.value)} className="my-px ml-1 h-[17px] flex-1 border-l border-black outline-none" />
            <div className="flex w-[18px] flex-col gap-0.5 pt-px">
              <button aria-label="Previous command" className="flex h-[9px] items-center justify-center border border-[#a0a8b8] bg-[#f0f0f3]"><svg width="7" height="4" viewBox="0 0 7 4"><path d="M0 4h7L3.500 0z" fill="#4a5fb8" /></svg></button>
              <button aria-label="Next command" className="flex h-[9px] items-center justify-center border border-[#a0a8b8] bg-[#f0f0f3]"><svg width="7" height="4" viewBox="0 0 7 4"><path d="M0 0h7L3.500 4z" fill="#4a5fb8" /></svg></button>
            </div>
          </div>
        </div>
      </div>

      {/* Toolbar group */}
      <div className="mt-[3px] flex shrink-0 border-t border-[#c2c2c6] pt-1 pl-1">
        <Grip />
        <div className="min-w-0 flex-1">
          <div className="flex h-[18px] items-end border-b border-[#a0a8b8]">
            <div className="flex min-w-0 flex-1 overflow-hidden">
              {toolTabs.map((label, i) => (
                <ToolbarTab key={label} label={label} first={i === 0} active={toolTab === label} onClick={() => setToolTab(label)} />
              ))}
            </div>
            <button aria-label="More tabs" className="flex h-[17px] w-[14px] items-center justify-center border-t border-l border-[#a0a8b8] bg-[#f4f4f5]">
              <svg width="9" height="7" viewBox="0 0 9 7" fill="none"><path d="M1 0.500l3 3-3 3M5 0.500l3 3-3 3" stroke="#000" strokeWidth="1.400" /></svg>
            </button>
            <button aria-label="Toolbar options" className="flex h-[18px] w-[18px] items-center justify-center"><GearIcon /></button>
          </div>
          <div className="flex h-[39px] overflow-hidden bg-linear-to-b from-[#b3b3b3] to-[#dedede] pt-px">
            {standardTools.map((tool) => <ToolButton key={tool.name} tool={tool} />)}
          </div>
        </div>
      </div>

      <main className="flex min-h-0 flex-1">
        <div className="w-16 shrink-0 pt-1 pl-px">
          <div className="ml-0.5 h-[3px] w-[55px] border-y border-[#b4b6c6]" />
          <div className="grid w-14 grid-cols-2">
            {sideTools.map((tool) => <ToolButton key={tool.name} tool={tool} />)}
          </div>
        </div>

        <div className="flex min-w-0 flex-1 flex-col">
          <Viewport />
          <div className="flex h-7 shrink-0 pt-px">
            {["Perspective", "Top", "Front", "Right"].map((label) => (
              <ViewTab key={label} label={label} active={viewTab === label} onClick={() => setViewTab(label)} />
            ))}
            <button aria-label="New viewport" className="flex h-6">
              <svg width="40" height="24" viewBox="0 0 40 24" fill="none" stroke="#a0a8b8">
                <path d="M0.500 12L10.500 23.500H36Q39.500 23.500 39.500 20V0" />
                <path d="M21.500 8.500h2v3h3v2h-3v3h-2v-3h-3v-2h3z" stroke="#666" />
              </svg>
            </button>
          </div>
        </div>

        <aside className="ml-2 flex shrink-0 flex-col pt-[3px]">
          <div className="h-[3px] border-y border-[#b4b6c6]" />
          <div className="flex min-h-0 flex-1">
            <div className="-mt-1.5 mb-[5px] flex w-[233px] flex-col *:flex-1"><PropertiesPanel /></div>
            <div className="mt-1 flex w-[23px] flex-col">
              <SideTab active label="Properties" icon={<svg width="15" height="15" viewBox="0 0 15 15"><Wheel x={7.5} y={7.5} r={5.4} /></svg>} />
              <SideTab
                label="Display"
                icon={
                  <svg width="15" height="15" viewBox="0 0 15 15">
                    <rect x="1" y="1" width="13" height="10" fill="url(#metal)" stroke="#222" strokeWidth="1.500" />
                    <path d="M5 13.500h5M7.500 11v2" stroke="#222" strokeWidth="2" />
                  </svg>
                }
              />
              <button aria-label="Panel options" className="mt-auto mb-1 ml-2"><GearIcon /></button>
            </div>
          </div>
        </aside>
      </main>

      {/* Object snaps */}
      <div className="flex h-[31px] shrink-0 gap-0.5 border-b border-[#a0a8b8] py-1 pl-[3px] text-sm text-[#7c7c7c]">
        <Grip />
        <div className="flex items-center gap-1 pl-px">
          {snaps.map((label) => <Snap key={label} label={label} checked={label === "End" || label === "Mid"} />)}
          <button className="flex items-center gap-[3px]"><span className="size-[19px] rounded-[3px] border border-[#b4b4b4] bg-[#f3f3f3]" />Project</button>
          <button className="flex items-center gap-[3px] text-black"><span className="size-[19px] rounded-[3px] border border-[#2c628b] bg-[#8d8f8f] shadow-[inset_0_0_0_1px_#6fb4de]" />Disable</button>
        </div>
      </div>

      <footer className="flex h-[21px] shrink-0 text-sm leading-[21px]">
        <StatusCell width="w-[51px]">CPlane</StatusCell>
        <StatusCell width="w-[66px]" center>x -26.9</StatusCell>
        <StatusCell width="w-[66px]" center>y 72.9</StatusCell>
        <StatusCell width="w-[66px]" center>z 0.0</StatusCell>
        <StatusCell width="w-[66px]">Millimeter</StatusCell>
        <button className="flex flex-1 items-center gap-0.5 border-r border-[#a0a8b8] pl-[3px] whitespace-nowrap">
          <span className="size-4 border border-black bg-[#7d26cd]" />Layer 02
        </button>
        <StatusCell width="w-[68px]" on>Grid Sna</StatusCell>
        <StatusCell width="w-11">Ortho</StatusCell>
        <StatusCell width="w-12">Planar</StatusCell>
        <StatusCell width="w-12">Osnap</StatusCell>
        <StatusCell width="w-[78px]">SmartTrack</StatusCell>
        <StatusCell width="w-[58px]" on>Gumbal</StatusCell>
        <StatusCell width="w-[97px]">Record Histor</StatusCell>
        <StatusCell width="w-[38px]">Filter</StatusCell>
        <div className="w-[19px] shrink-0" />
      </footer>
    </div>
  )
}

export default App
